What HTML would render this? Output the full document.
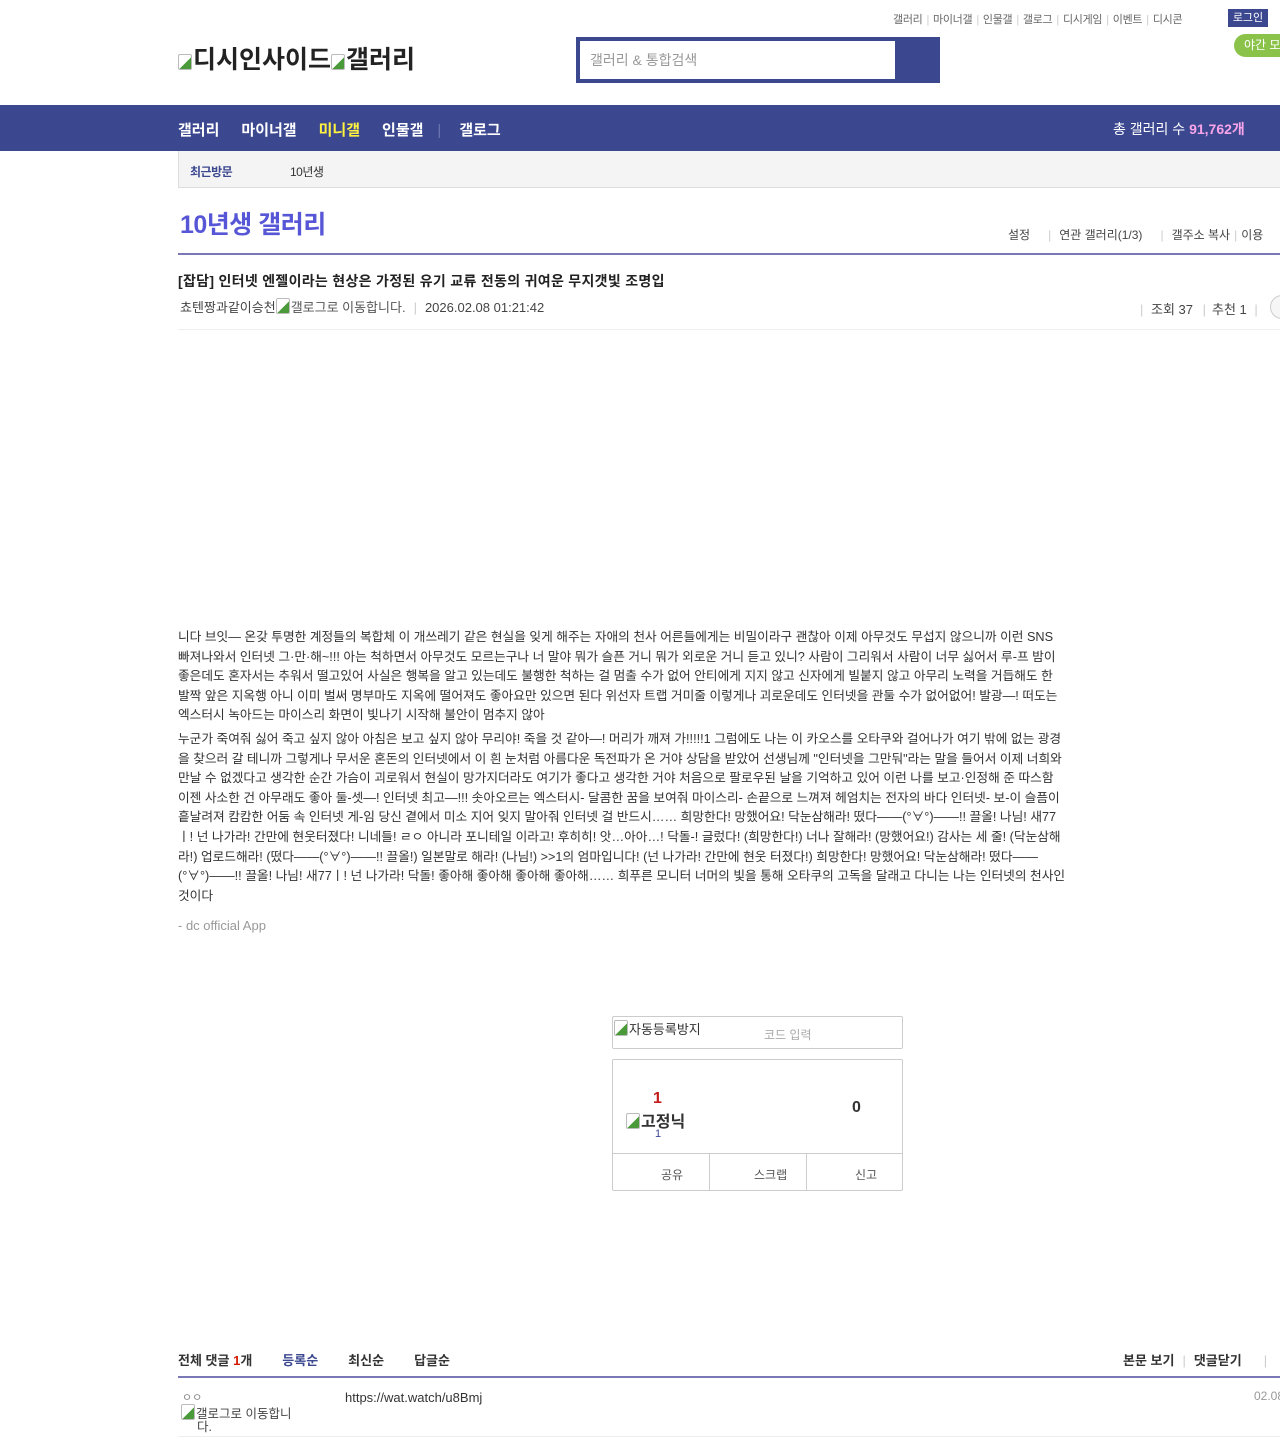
<!DOCTYPE html>
<html><head><meta charset="utf-8">
<style>
*{margin:0;padding:0;box-sizing:border-box}
body{width:1280px;height:1440px;background:#fff;font-family:"Liberation Sans","Noto Sans CJK KR",sans-serif;color:#333;position:relative;overflow:hidden}
.a{position:absolute;white-space:nowrap}
.sep{color:#ccc;margin:0 4px}
.bi{display:inline-block;width:14px;height:16px;border:1px solid #bbb;border-radius:2px;background:linear-gradient(135deg,#fff 55%,#4a9a3a 56%);vertical-align:-2px;margin-right:1px}
</style></head><body>
<div class="a" style="top:11px;left:893px;font-size:11px;color:#666;letter-spacing:-0.3px">갤러리<span class="sep">|</span>마이너갤<span class="sep">|</span>인물갤<span class="sep">|</span>갤로그<span class="sep">|</span>디시게임<span class="sep">|</span>이벤트<span class="sep">|</span>디시콘</div>
<div class="a" style="top:9px;left:1228px;width:40px;height:18px;background:#3b4890;color:#fff;font-size:11px;text-align:center;line-height:18px">로그인</div>
<div class="a" style="top:34px;left:1234px;width:60px;height:23px;background:#8bc34a;border-radius:12px;color:#fff;font-size:12px;line-height:23px;padding-left:10px">야간 모드</div>
<div class="a" style="top:40px;left:178px;font-size:25px;font-weight:bold;color:#222"><span class="bi"></span>디시인사이드<span class="bi"></span>갤러리</div>
<div class="a" style="top:37px;left:576px;width:364px;height:46px;background:#3b4890"></div>
<div class="a" style="top:41px;left:580px;width:315px;height:38px;background:#fff;font-size:14px;color:#999;line-height:38px;padding-left:10px">갤러리 &amp; 통합검색</div>
<div class="a" style="top:105px;left:0;width:1280px;height:46px;background:#3b4890"></div>
<div class="a" style="top:119px;left:178px;font-size:15px;font-weight:bold;color:#fff">갤러리<span style="margin-left:22px">마이너갤</span><span style="margin-left:22px;color:#fff23f">미니갤</span><span style="margin-left:22px">인물갤</span><span style="margin-left:14px;color:#6b76b0;font-weight:normal">|</span><span style="margin-left:18px">갤로그</span></div>
<div class="a" style="top:119px;left:1113px;font-size:14px;color:#fff">총 갤러리 수 <b style="color:#f8a4e8">91,762개</b></div>
<div class="a" style="top:151px;left:178px;width:1110px;height:37px;background:#f4f4f4;border:1px solid #ddd;border-top:none"></div>
<div class="a" style="top:163px;left:190px;font-size:12px;color:#3b4890;font-weight:bold;letter-spacing:-0.5px">최근방문</div>
<div class="a" style="top:163px;left:290px;font-size:12px;color:#333;letter-spacing:-0.5px">10년생</div>
<div class="a" style="top:205px;left:180px;font-size:25px;font-weight:bold;color:#5656d6;letter-spacing:-0.5px">10년생 갤러리</div>
<div class="a" style="top:226px;left:1008px;font-size:12px;color:#444">설정<span class="sep" style="margin:0 8px 0 18px">|</span>연관 갤러리(1/3)<span class="sep" style="margin:0 8px 0 18px">|</span>갤주소 복사<span class="sep">|</span>이용</div>
<div class="a" style="top:253px;left:178px;width:1110px;height:2px;background:#7a78b6"></div>
<div class="a" style="top:271px;left:178px;font-size:14px;font-weight:bold;color:#222;letter-spacing:0.3px">[잡담] 인터넷 엔젤이라는 현상은 가정된 유기 교류 전동의 귀여운 무지갯빛 조명입</div>
<div class="a" style="top:297px;left:180px;font-size:13px;color:#444">쵸텐짱과같이승천<span class="bi"></span><span style="color:#555">갤로그로 이동합니다.</span><span class="sep" style="margin:0 8px">|</span>2026.02.08 01:21:42</div>
<div class="a" style="top:299px;left:1136px;font-size:13px;color:#444"><span class="sep">|</span> 조회 37 <span class="sep" style="margin:0 6px">|</span>추천 1 <span class="sep">|</span></div>
<div class="a" style="top:295px;left:1270px;width:24px;height:24px;border:1px solid #ccc;border-radius:12px;background:#f6f6f6"></div>
<div class="a" style="top:329px;left:178px;width:1110px;height:1px;background:#eee"></div>
<div class="a" style="top:628px;left:178px;width:888px;font-size:12.7px;line-height:19.6px;color:#333;white-space:normal">니다 브잇— 온갖 투명한 계정들의 복합체 이 개쓰레기 같은 현실을 잊게 해주는 자애의 천사 어른들에게는 비밀이라구 괜찮아 이제 아무것도 무섭지 않으니까 이런 SNS 빠져나와서 인터넷 그·만·해~!!! 아는 척하면서 아무것도 모르는구나 너 말야 뭐가 슬픈 거니 뭐가 외로운 거니 듣고 있니? 사람이 그리워서 사람이 너무 싫어서 루-프 밤이 좋은데도 혼자서는 추워서 떨고있어 사실은 행복을 알고 있는데도 불행한 척하는 걸 멈출 수가 없어 안티에게 지지 않고 신자에게 빌붙지 않고 아무리 노력을 거듭해도 한 발짝 앞은 지옥행 아니 이미 벌써 명부마도 지옥에 떨어져도 좋아요만 있으면 된다 위선자 트랩 거미줄 이렇게나 괴로운데도 인터넷을 관둘 수가 없어없어! 발광—! 떠도는 엑스터시 녹아드는 마이스리 화면이 빛나기 시작해 불안이 멈추지 않아</div>
<div class="a" style="top:730px;left:178px;width:888px;font-size:12.7px;line-height:19.6px;color:#333;white-space:normal">누군가 죽여줘 싫어 죽고 싶지 않아 아침은 보고 싶지 않아 무리야! 죽을 것 같아—! 머리가 깨져 가!!!!!1 그럼에도 나는 이 카오스를 오타쿠와 걸어나가 여기 밖에 없는 광경을 찾으러 갈 테니까 그렇게나 무서운 혼돈의 인터넷에서 이 흰 눈처럼 아름다운 독전파가 온 거야 상담을 받았어 선생님께 "인터넷을 그만둬"라는 말을 들어서 이제 너희와 만날 수 없겠다고 생각한 순간 가슴이 괴로워서 현실이 망가지더라도 여기가 좋다고 생각한 거야 처음으로 팔로우된 날을 기억하고 있어 이런 나를 보고·인정해 준 따스함 이젠 사소한 건 아무래도 좋아 둘-셋—! 인터넷 최고—!!! 솟아오르는 엑스터시- 달콤한 꿈을 보여줘 마이스리- 손끝으로 느껴져 헤엄치는 전자의 바다 인터넷- 보-이 슬픔이 흩날려져 캄캄한 어둠 속 인터넷 게-임 당신 곁에서 미소 지어 잊지 말아줘 인터넷 걸 반드시…… 희망한다! 망했어요! 닥눈삼해라! 떴다——(°∀°)——!! 끌올! 나님! 새77ㅣ! 넌 나가라! 간만에 현웃터졌다! 니네들! ㄹㅇ 아니라 포니테일 이라고! 후히히! 앗…아아…! 닥돌-! 글렀다! (희망한다!) 너나 잘해라! (망했어요!) 감사는 세 줄! (닥눈삼해라!) 업로드해라! (떴다——(°∀°)——!! 끌올!) 일본말로 해라! (나님!) &gt;&gt;1의 엄마입니다! (넌 나가라! 간만에 현웃 터졌다!) 희망한다! 망했어요! 닥눈삼해라! 떴다——(°∀°)——!! 끌올! 나님! 새77ㅣ! 넌 나가라! 닥돌! 좋아해 좋아해 좋아해 좋아해…… 희푸른 모니터 너머의 빛을 통해 오타쿠의 고독을 달래고 다니는 나는 인터넷의 천사인 것이다</div>
<div class="a" style="top:918px;left:178px;font-size:13px;color:#999">- dc official App</div>
<div class="a" style="top:1016px;left:612px;width:291px;height:33px;border:1px solid #ccc;border-radius:2px"></div>
<div class="a" style="top:1019px;left:614px;font-size:13px;color:#333"><span class="bi"></span>자동등록방지</div>
<div class="a" style="top:1026px;left:764px;font-size:12px;color:#aaa">코드 입력</div>
<div class="a" style="top:1059px;left:612px;width:291px;height:132px;border:1px solid #ccc;border-radius:2px"></div>
<div class="a" style="top:1153px;left:612px;width:291px;height:1px;background:#ccc"></div>
<div class="a" style="top:1153px;left:709px;width:1px;height:38px;background:#ccc"></div>
<div class="a" style="top:1153px;left:806px;width:1px;height:38px;background:#ccc"></div>
<div class="a" style="top:1090px;left:653px;font-size:16px;font-weight:bold;color:#c21d1d">1</div>
<div class="a" style="top:1108px;left:626px;font-size:16px;font-weight:bold;color:#333"><span class="bi"></span>고정닉</div>
<div class="a" style="top:1128px;left:655px;font-size:11px;color:#3b4890">1</div>
<div class="a" style="top:1099px;left:852px;font-size:16px;font-weight:bold;color:#333">0</div>
<div class="a" style="top:1166px;left:661px;font-size:12px;color:#555">공유</div>
<div class="a" style="top:1166px;left:754px;font-size:12px;color:#555">스크랩</div>
<div class="a" style="top:1166px;left:855px;font-size:12px;color:#555">신고</div>
<div class="a" style="top:1350px;left:178px;font-size:13px;font-weight:bold;color:#333">전체 댓글 <span style="color:#d31900">1</span>개<span style="margin-left:30px;color:#3b4890">등록순</span><span style="margin-left:30px">최신순</span><span style="margin-left:30px">답글순</span></div>
<div class="a" style="top:1350px;left:1123px;font-size:13px;font-weight:bold;color:#333">본문 보기<span class="sep" style="margin:0 8px;font-weight:normal">|</span>댓글닫기<span class="sep" style="margin-left:22px;font-weight:normal">|</span></div>
<div class="a" style="top:1376px;left:178px;width:1110px;height:2px;background:#7a78b6"></div>
<div class="a" style="top:1389px;left:182px;font-size:11px;color:#888">ㅇㅇ</div>
<div class="a" style="top:1404px;left:181px;font-size:12.5px;color:#444;line-height:13px"><span class="bi"></span>갤로그로 이동합니<br><span style="margin-left:16px">다.</span></div>
<div class="a" style="top:1390px;left:345px;font-size:13px;color:#333">https://wat.watch/u8Bmj</div>
<div class="a" style="top:1389px;left:1254px;font-size:12px;color:#999">02.08</div>
<div class="a" style="top:1436px;left:178px;width:1110px;height:1px;background:#eee"></div>
</body></html>
